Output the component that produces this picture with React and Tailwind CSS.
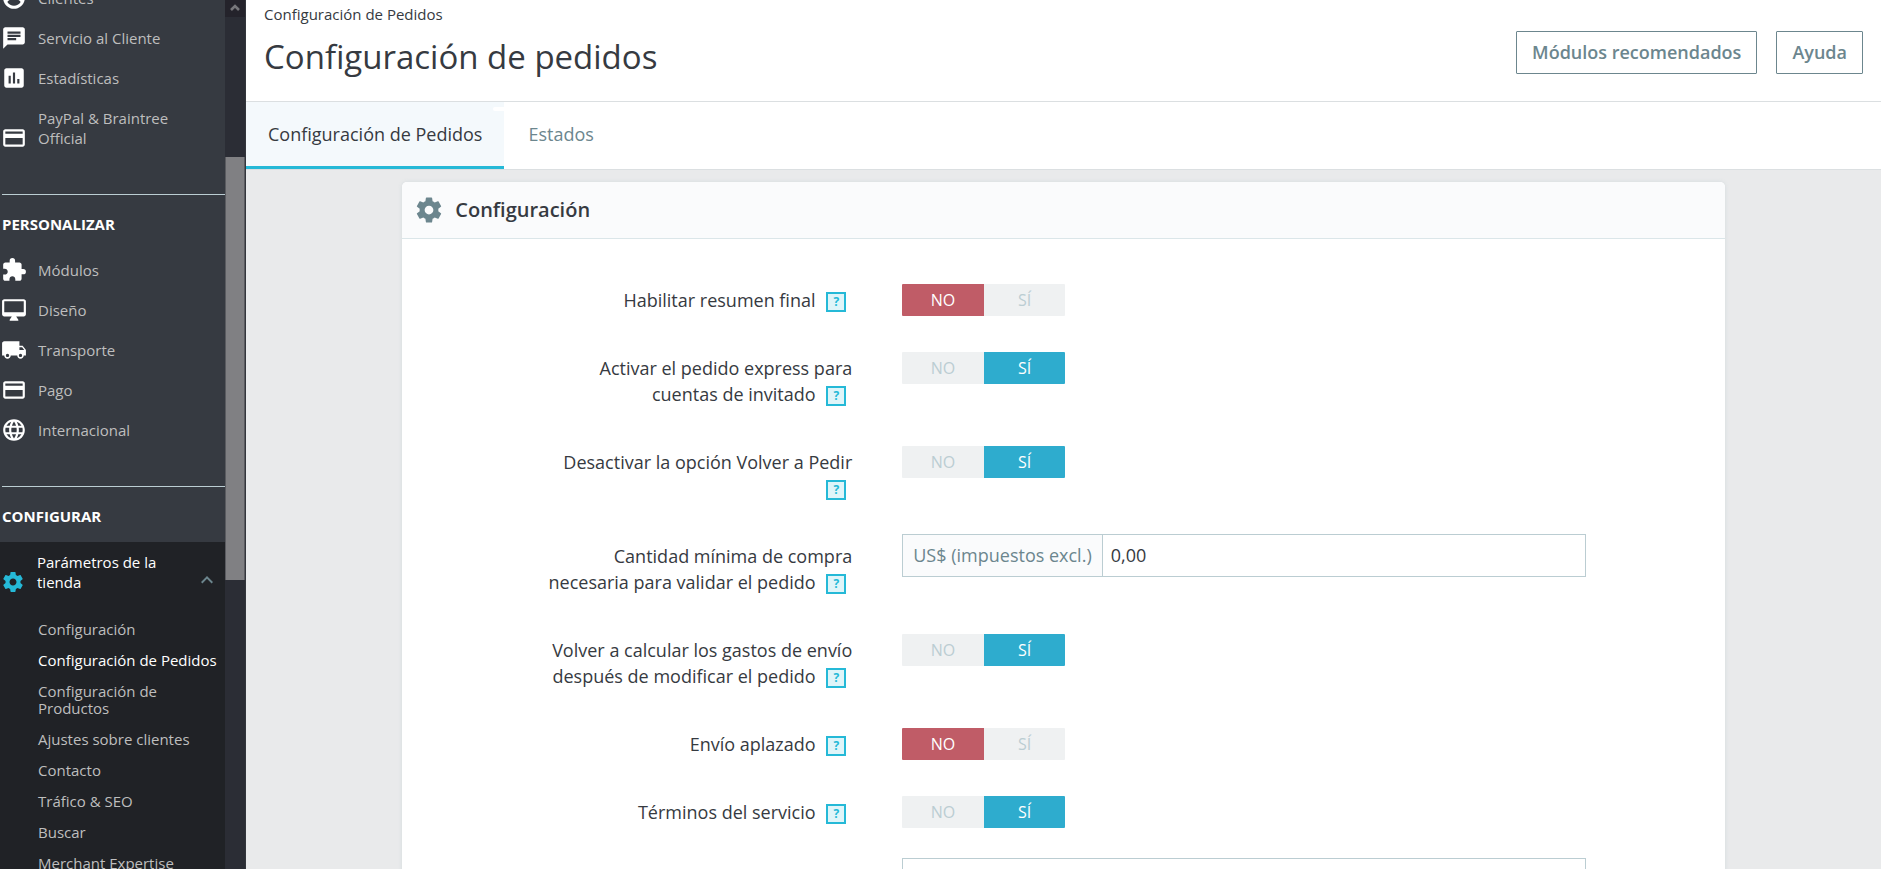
import {
  MdAssessment,
  MdChat,
  MdExtension,
  MdKeyboardArrowUp,
  MdLanguage,
  MdLocalShipping,
  MdPayment,
} from "react-icons/md";

function Gear({ className }) {
  return (
    <svg viewBox="0 0 24 24" fill="currentColor" aria-hidden="true" className={className}>
      <path d="M19.43 12.98c.04-.32.07-.64.07-.98s-.03-.66-.07-.98l2.11-1.65c.19-.15.24-.42.12-.64l-2-3.46c-.12-.22-.39-.3-.61-.22l-2.49 1c-.52-.4-1.08-.73-1.69-.98l-.38-2.65C14.46 2.18 14.25 2 14 2h-4c-.25 0-.46.18-.49.42l-.38 2.65c-.61.25-1.17.59-1.69.98l-2.49-1c-.23-.09-.49 0-.61.22l-2 3.46c-.13.22-.07.49.12.64l2.11 1.65c-.04.32-.07.65-.07.98s.03.66.07.98l-2.11 1.65c-.19.15-.24.42-.12.64l2 3.46c.12.22.39.3.61.22l2.49-1c.52.4 1.08.73 1.69.98l.38 2.65c.03.24.24.42.49.42h4c.25 0 .46-.18.49-.42l.38-2.65c.61-.25 1.17-.59 1.69-.98l2.49 1c.23.09.49 0 .61-.22l2-3.46c.12-.22.07-.49-.12-.64l-2.11-1.65zM12 15.5c-1.93 0-3.5-1.57-3.5-3.5s1.57-3.5 3.5-3.5 3.5 1.57 3.5 3.5-1.57 3.5-3.5 3.5z" />
    </svg>
  );
}

function Monitor({ className }) {
  return (
    <svg viewBox="0 0 24 24" fill="currentColor" aria-hidden="true" className={className}>
      <path d="M21 2H3c-1.1 0-2 .9-2 2v12c0 1.1.9 2 2 2h7l-2 3v1h8v-1l-2-3h7c1.1 0 2-.9 2-2V4c0-1.1-.9-2-2-2zm0 12H3V4h18v10z" />
    </svg>
  );
}

function Account({ className }) {
  return (
    <svg viewBox="0 0 24 24" fill="currentColor" aria-hidden="true" className={className}>
      <path d="M12 2C6.48 2 2 6.48 2 12s4.48 10 10 10 10-4.48 10-10S17.52 2 12 2zm0 3c1.66 0 3 1.34 3 3s-1.34 3-3 3-3-1.34-3-3 1.34-3 3-3zm0 14.2c-2.5 0-4.71-1.28-6-3.22.03-1.99 4-3.08 6-3.08 1.99 0 5.97 1.09 6 3.08-1.29 1.94-3.5 3.22-6 3.22z" />
    </svg>
  );
}

const sellItems = [
  { icon: Account, text: "Clientes" },
  { icon: MdChat, text: "Servicio al Cliente" },
  { icon: MdAssessment, text: "Estadísticas" },
  { icon: MdPayment, text: "PayPal & Braintree Official" },
];

const customizeItems = [
  { icon: MdExtension, text: "Módulos" },
  { icon: Monitor, text: "Diseño" },
  { icon: MdLocalShipping, text: "Transporte" },
  { icon: MdPayment, text: "Pago" },
  { icon: MdLanguage, text: "Internacional" },
];

const shopItems = [
  "Configuración",
  "Configuración de Pedidos",
  "Configuración de Productos",
  "Ajustes sobre clientes",
  "Contacto",
  "Tráfico & SEO",
  "Buscar",
  "Merchant Expertise",
];

function NavList({ items, className = "" }) {
  return (
    <ul className={className}>
      {items.map(({ icon: Icon, text }) => (
        <li key={text}>
          <a href="#" className="flex items-end gap-[11px] py-[10px] pl-px pr-10 text-[#bebebe]">
            <span className="flex h-5 w-[26px] shrink-0 items-center justify-center text-white">
              <Icon className="size-[26px] shrink-0" aria-hidden="true" />
            </span>
            {text}
          </a>
        </li>
      ))}
    </ul>
  );
}

function SectionTitle({ children }) {
  return (
    <h2 className="ml-[2px] mt-9 border-t border-[#bbcdd2] pb-4 pt-[19px] font-bold text-white">
      {children}
    </h2>
  );
}

function Sidebar() {
  return (
    <aside className="flex w-[246px] shrink-0 overflow-hidden border-r border-[#33363c] bg-[#363a41]">
      <nav className="min-w-0 flex-1 text-[15px] leading-5">
        <NavList items={sellItems} className="-mt-[22px]" />
        <SectionTitle>PERSONALIZAR</SectionTitle>
        <NavList items={customizeItems} />
        <SectionTitle>CONFIGURAR</SectionTitle>
        <div className="bg-[#202226] pb-10">
          <a href="#" className="flex items-end py-[10px] pr-[6px] text-white">
            <span className="flex h-5 w-[26px] shrink-0 items-center justify-center text-[#25b9d7]">
              <Gear className="size-6 shrink-0" />
            </span>
            <span className="ml-[11px] w-32">Parámetros de la tienda</span>
            <MdKeyboardArrowUp className="ml-auto size-6 text-[#6c868e]" aria-hidden="true" />
          </a>
          <ul className="mt-3 pl-[38px] leading-[17px]">
            {shopItems.map((text) => (
              <li key={text}>
                <a
                  href="#"
                  className={
                    text === "Configuración de Pedidos"
                      ? "block whitespace-nowrap py-[7px] text-white"
                      : "block py-[7px] pr-5 text-[#bebebe]"
                  }
                >
                  {text}
                </a>
              </li>
            ))}
          </ul>
        </div>
      </nav>
      <div className="flex w-5 shrink-0 flex-col bg-[#2b2d35]" aria-hidden="true">
        <div className="flex h-[17px] items-center justify-center bg-[#24232b] pb-[3px] text-[#77777b]">
          <svg viewBox="0 0 10 7" className="h-[7px] w-[10px]" fill="none" stroke="currentColor" strokeWidth="2.6">
            <path d="M1 6l4-4 4 4" />
          </svg>
        </div>
        <div className="mt-[140px] h-[423px] border-x border-[#5a5b60] bg-[#808083]" />
      </div>
    </aside>
  );
}

function Header() {
  return (
    <header className="bg-white">
      <div className="flex h-[102px] justify-between border-b border-[#dbdfe1] px-[18px]">
        <div>
          <p className="pt-[3px] text-[15px] leading-[22px] text-[#363a41]">Configuración de Pedidos</p>
          <h1 className="mt-[10px] text-[33px] leading-[44px] text-[#363a41]">Configuración de pedidos</h1>
        </div>
        <div className="mt-[31px] flex items-start gap-[19px] text-[18px] font-semibold text-[#6c868e]">
          <button type="button" className="h-[43px] rounded-[1px] border border-[#6c868e] px-[15px]">
            Módulos recomendados
          </button>
          <button type="button" className="h-[43px] rounded-[1px] border border-[#6c868e] px-[15px]">
            Ayuda
          </button>
        </div>
      </div>
      <nav className="flex h-[68px] border-b border-[#dbdfe1] text-[18px] text-[#6c868e]">
        <a
          href="#"
          className="relative flex items-center border-b-[3px] border-[#25b9d7] bg-[#f4f9fc] px-[22px] text-[#363a41]"
        >
          Configuración de Pedidos
          <span className="absolute right-0 top-[5px] h-1 w-[11px] rounded-l-full bg-white" />
        </a>
        <a href="#" className="flex items-center border-b-[3px] border-transparent px-6">
          Estados
        </a>
      </nav>
    </header>
  );
}

function Help({ text }) {
  return (
    <button
      type="button"
      aria-label={`Ayuda: ${text}`}
      className="mx-[6px] inline-flex size-5 items-center justify-center border-2 border-[#25b9d7] bg-[#dff5f9] align-middle text-xs leading-none font-bold text-[#25b9d7]"
    >
      ?
    </button>
  );
}

function Row({ label, id, forInput, children }) {
  return (
    <div className="mb-6 flex gap-[50px]">
      <div className="w-[310px] shrink-0 py-[9px] text-right leading-[26px]">
        {forInput ? (
          <label htmlFor={forInput}>{label}</label>
        ) : (
          <span id={id}>{label}</span>
        )}{" "}
        <Help text={label} />
      </div>
      <div className="min-w-0 flex-1">{children}</div>
    </div>
  );
}

function Switch({ name, on, labelledBy }) {
  const base = "flex flex-1 cursor-pointer items-center justify-center bg-[#eff1f2] text-[#bbcdd2] has-checked:text-white";
  return (
    <div
      role="radiogroup"
      aria-labelledby={labelledBy}
      className="relative mt-[6px] flex h-8 w-[163px] overflow-hidden rounded-[1px] text-base"
    >
      <label className={`${base} has-checked:bg-[#c05c67]`}>
        <input type="radio" name={name} defaultChecked={!on} className="sr-only" />
        NO
      </label>
      <label className={`${base} has-checked:bg-[#2eacce]`}>
        <input type="radio" name={name} defaultChecked={on} className="sr-only" />
        SÍ
      </label>
    </div>
  );
}

function SwitchRow({ name, label, on }) {
  return (
    <Row label={label} id={`${name}-label`}>
      <Switch name={name} on={on} labelledBy={`${name}-label`} />
    </Row>
  );
}

export default function App() {
  return (
    <div className="flex h-screen overflow-hidden bg-[#e9eaeb] font-['Open_Sans',sans-serif] text-[#363a41]">
      <Sidebar />
      <div className="min-w-0 flex-1">
        <Header />
        <main className="px-6 pt-3">
          <section className="mx-auto w-10/12 rounded-[5px] bg-white shadow-[0_0_4px_0_#d3dbde]">
            <h2 className="flex h-[57px] items-center gap-[11px] rounded-t-[5px] border-b border-[#dbe6e9] bg-[#fafbfc] px-3 text-[20px] font-semibold">
              <Gear className="size-[30px] text-[#6c868e]" />
              Configuración
            </h2>
            <form className="pb-10 pl-[140px] pr-[139px] pt-[39px] text-[18px]">
              <SwitchRow name="summary" label="Habilitar resumen final" on={false} />
              <SwitchRow name="guest" label="Activar el pedido express para cuentas de invitado" on />
              <SwitchRow name="reorder" label="Desactivar la opción Volver a Pedir" on />
              <Row label="Cantidad mínima de compra necesaria para validar el pedido" forInput="minimum">
                <div className="flex h-[43px] border border-[#bbcdd2]">
                  <span className="flex items-center border-r border-[#bbcdd2] bg-[#fafbfc] px-[10px] text-[#6c868e]">
                    US$ (impuestos excl.)
                  </span>
                  <input id="minimum" type="text" defaultValue="0,00" className="min-w-0 flex-1 px-2 outline-none" />
                </div>
              </Row>
              <SwitchRow
                name="shipping"
                label="Volver a calcular los gastos de envío después de modificar el pedido"
                on
              />
              <SwitchRow name="delayed" label="Envío aplazado" on={false} />
              <SwitchRow name="terms" label="Términos del servicio" on />
              <div className="flex gap-[50px]">
                <div className="w-[310px] shrink-0" />
                <select aria-label="Página de términos" className="h-[43px] min-w-0 flex-1 border border-[#bbcdd2] bg-white" />
              </div>
            </form>
          </section>
        </main>
      </div>
    </div>
  );
}
